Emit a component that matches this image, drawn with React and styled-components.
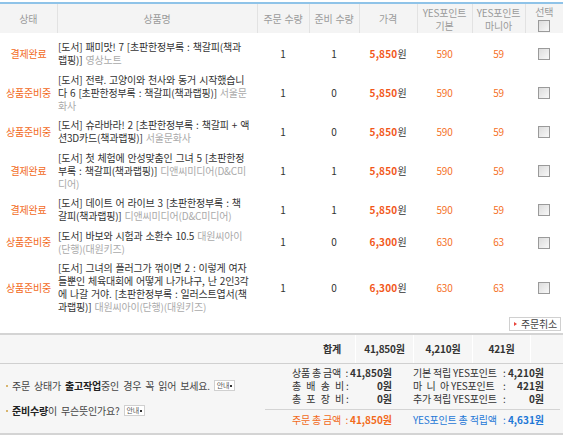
import React from "react";
import styled, { createGlobalStyle } from "styled-components";

const GlobalStyle = createGlobalStyle`
  body {
    margin: 0;
    background: #fff;
    font-family: "Noto Sans CJK KR", "Liberation Sans", sans-serif;
    color: #333;
  }
`;

const orders = [
  {
    status: "결제완료",
    title: "[도서] 패미맛! 7 [초판한정부록 : 책갈피(책과랩핑)]",
    pub: "영상노트",
    qty: 1,
    ready: 1,
    price: "5,850",
    base: 590,
    mania: 59,
  },
  {
    status: "상품준비중",
    title: "[도서] 전략. 고양이와 천사와 동거 시작했습니다 6 [초판한정부록 : 책갈피(책과랩핑)]",
    pub: "서울문화사",
    qty: 1,
    ready: 0,
    price: "5,850",
    base: 590,
    mania: 59,
  },
  {
    status: "상품준비중",
    title: "[도서] 슈라바라! 2 [초판한정부록 : 책갈피 + 액션3D카드(책과랩핑)]",
    pub: "서울문화사",
    qty: 1,
    ready: 0,
    price: "5,850",
    base: 590,
    mania: 59,
  },
  {
    status: "결제완료",
    title: "[도서] 첫 체험에 안성맞춤인 그녀 5 [초판한정부록 : 책갈피(책과랩핑)]",
    pub: "디앤씨미디어(D&C미디어)",
    qty: 1,
    ready: 1,
    price: "5,850",
    base: 590,
    mania: 59,
  },
  {
    status: "결제완료",
    title: "[도서] 데이트 어 라이브 3 [초판한정부록 : 책갈피(책과랩핑)]",
    pub: "디앤씨미디어(D&C미디어)",
    qty: 1,
    ready: 1,
    price: "5,850",
    base: 590,
    mania: 59,
  },
  {
    status: "상품준비중",
    title: "[도서] 바보와 시험과 소환수 10.5",
    pub: "대원씨아이(단행)(대원키즈)",
    qty: 1,
    ready: 0,
    price: "6,300",
    base: 630,
    mania: 63,
  },
  {
    status: "상품준비중",
    title:
      "[도서] 그녀의 플러그가 꺾이면 2 : 이렇게 여자들뿐인 체육대회에 어떻게 나가냐구, 난 2인3각에 나갈 거야. [초판한정부록 : 일러스트엽서(책과랩핑)]",
    pub: "대원씨아이(단행)(대원키즈)",
    qty: 1,
    ready: 0,
    price: "6,300",
    base: 630,
    mania: 63,
  },
];

const cols = [57, 200, 52, 50, 58, 55, 53, 38];

export default function App() {
  return (
    <>
      <GlobalStyle />
      <Page>
        <Table>
          <colgroup>
            {cols.map((w, i) => (
              <col key={i} style={{ width: w }} />
            ))}
          </colgroup>
          <thead>
            <tr>
              <Th>상태</Th>
              <Th>상품명</Th>
              <Th>주문 수량</Th>
              <Th>준비 수량</Th>
              <Th>가격</Th>
              <Th>
                YES포인트
                <br />
                기본
              </Th>
              <Th>
                YES포인트
                <br />
                마니아
              </Th>
              <Th>
                선택
                <br />
                <Check />
              </Th>
            </tr>
          </thead>
          <tbody>
            <Spacer>
              <td colSpan={8} />
            </Spacer>
            {orders.map((o, i) => (
              <tr key={i}>
                <Status>{o.status}</Status>
                <Product>
                  {o.title} <Pub>{o.pub}</Pub>
                </Product>
                <Num>{o.qty}</Num>
                <Num>{o.ready}</Num>
                <Num>
                  <Price>{o.price}</Price>원
                </Num>
                <Point>{o.base}</Point>
                <Point>{o.mania}</Point>
                <Num>
                  <Check />
                </Num>
              </tr>
            ))}
            <tr>
              <ActionCell colSpan={8}>
                <CancelButton>
                  <Arrow />
                  주문취소
                </CancelButton>
              </ActionCell>
            </tr>
          </tbody>
        </Table>

        <Footer>
          <TotalRow>
            <TotalLabel>합계</TotalLabel>
            <TotalCell>41,850원</TotalCell>
            <TotalCell>4,210원</TotalCell>
            <TotalCell>421원</TotalCell>
            <TotalCell />
          </TotalRow>
          <Details>
            <Notes>
              <Note>
                <Bullet />
                주문 상태가 <b>출고작업</b>중인 경우 꼭 읽어 보세요.
                <InfoButton>
                  안내<Dot />
                </InfoButton>
              </Note>
              <Note>
                <Bullet />
                <b>준비수량</b>이 무슨뜻인가요?
                <InfoButton>
                  안내<Dot />
                </InfoButton>
              </Note>
            </Notes>
            <Summary>
              <SumGrid>
                <SumCol>
                  <SumLine $w={100}>
                    <SumLabel $w={52}>상품 총 금액</SumLabel>
                    <Colon>:</Colon>
                    <SumValue>41,850원</SumValue>
                  </SumLine>
                  <SumLine $w={100}>
                    <SumLabel $w={52} $spread>총 배 송 비</SumLabel>
                    <Colon>:</Colon>
                    <SumValue>0원</SumValue>
                  </SumLine>
                  <SumLine $w={100}>
                    <SumLabel $w={52} $spread>총 포 장 비</SumLabel>
                    <Colon>:</Colon>
                    <SumValue>0원</SumValue>
                  </SumLine>
                </SumCol>
                <SumCol>
                  <SumLine $w={131}>
                    <SumLabel $w={88}>기본 적립 YES포인트</SumLabel>
                    <Colon>:</Colon>
                    <SumValue>4,210원</SumValue>
                  </SumLine>
                  <SumLine $w={131}>
                    <SumLabel $w={88}>
                      <Spread>마 니 아</Spread> YES포인트
                    </SumLabel>
                    <Colon>:</Colon>
                    <SumValue>421원</SumValue>
                  </SumLine>
                  <SumLine $w={131}>
                    <SumLabel $w={88}>추가 적립 YES포인트</SumLabel>
                    <Colon>:</Colon>
                    <SumValue>0원</SumValue>
                  </SumLine>
                </SumCol>
              </SumGrid>
              <SumGrid $total>
                <SumCol>
                  <SumLine $w={100} $color="#f26a1b">
                    <SumLabel $w={52}>주문 총 금액</SumLabel>
                    <Colon>:</Colon>
                    <SumValue>41,850원</SumValue>
                  </SumLine>
                </SumCol>
                <SumCol>
                  <SumLine $w={131} $color="#1f78d6">
                    <SumLabel $w={88}>YES포인트 총 적립액</SumLabel>
                    <Colon>:</Colon>
                    <SumValue>4,631원</SumValue>
                  </SumLine>
                </SumCol>
              </SumGrid>
            </Summary>
          </Details>
        </Footer>
      </Page>
    </>
  );
}

const Page = styled.div`
  width: 563px;
  padding-top: 2px;
  font-size: 10px;
  letter-spacing: -0.2px;
  word-spacing: 1px;
`;

const Table = styled.table`
  width: 563px;
  table-layout: fixed;
  border-collapse: collapse;
  border-top: 2px solid #8fc3e8;
  font-size: 10px;
`;

const Th = styled.th`
  height: 29px;
  padding: 0;
  background: #f4f4f4;
  color: #9a9a9a;
  font-weight: normal;
  line-height: 13px;
  text-align: center;
  vertical-align: middle;
  border-left: 1px solid #e2e2e2;
  &:first-child {
    border-left: 0;
  }
`;

const Spacer = styled.tr`
  td {
    height: 4px;
    padding: 0;
  }
`;

const Cell = styled.td`
  padding: 3px 2px 3.5px;
  line-height: 13px;
  vertical-align: middle;
`;

const Status = styled(Cell)`
  color: #f26a1b;
  text-align: center;
  padding-left: 0;
  padding-right: 0;
`;

const Product = styled(Cell)`
  color: #333;
  padding-left: 1px;
  padding-right: 7.8px;
`;

const Pub = styled.span`
  color: #aaa;
`;

const Num = styled(Cell)`
  text-align: center;
  color: #333;
`;

const Price = styled.b`
  color: #f2581b;
  letter-spacing: 0.2px;
`;

const Point = styled(Cell)`
  text-align: center;
  color: #f5701f;
`;

const Check = styled.span`
  display: inline-block;
  width: 10px;
  height: 10px;
  margin-top: 1px;
  border: 1px solid #9a9a9a;
  background: linear-gradient(135deg, #dcdcdc, #f8f8f8);
  vertical-align: middle;
`;

const ActionCell = styled.td`
  padding: 0 2px 2px 0;
  line-height: 0;
  text-align: right;
`;

const CancelButton = styled.span`
  display: inline-flex;
  align-items: center;
  gap: 4px;
  height: 12px;
  padding: 0 3px 0 4px;
  border: 1px solid #d0d0d0;
  background: #fff;
  color: #444;
  font-size: 10px;
  line-height: 12px;
  word-spacing: 0;
  vertical-align: top;
`;

const Arrow = styled.span`
  width: 0;
  height: 0;
  border-top: 2px solid transparent;
  border-bottom: 2px solid transparent;
  border-left: 3px solid #e8453c;
`;

const Footer = styled.div`
  background: #f6f6f6;
  border-top: 2px solid #d4d4d4;
  border-bottom: 2px solid #d4d4d4;
`;

const TotalRow = styled.div`
  display: grid;
  grid-template-columns: 355px 58px 59px 58px 1fr;
  height: 28px;
  border-bottom: 1px solid #d0d0d0;
  font-weight: bold;
  color: #333;
`;

const TotalCell = styled.div`
  display: flex;
  align-items: center;
  justify-content: center;
  border-left: 1px solid #fff;
`;

const TotalLabel = styled(TotalCell)`
  justify-content: flex-end;
  padding-right: 14px;
  border-left: 0;
`;

const Details = styled.div`
  display: flex;
  height: 69px;
`;

const Notes = styled.div`
  width: 265px;
  display: flex;
  flex-direction: column;
  justify-content: center;
  gap: 12px;
  padding-left: 6px;
  box-sizing: border-box;
  color: #444;
  word-spacing: 2px;
  b {
    color: #222;
  }
`;

const Note = styled.div`
  display: flex;
  align-items: center;
  line-height: 13px;
  white-space: pre;
`;

const Bullet = styled.span`
  width: 2px;
  height: 2px;
  margin-right: 4px;
  background: #d8b56e;
`;

const InfoButton = styled.span`
  display: inline-flex;
  align-items: center;
  gap: 1px;
  height: 9px;
  margin-left: 4px;
  padding: 0 2px;
  border: 1px solid #d0d0d0;
  background: #fff;
  font-size: 7px;
  color: #555;
`;

const Dot = styled.span`
  width: 2px;
  height: 2px;
  background: #333;
`;

const Summary = styled.div`
  flex: 1;
  padding: 2px 3px 0 0;
`;

const SumGrid = styled.div`
  display: grid;
  grid-template-columns: 121px 1fr;
  padding: ${(p) => (p.$total ? "3px 0 0 27px" : "0 0 4px 27px")};
  border-top: ${(p) => (p.$total ? "1px solid #d4d4d4" : "0")};
`;

const SumCol = styled.div`
  display: flex;
  flex-direction: column;
`;

const SumLine = styled.div`
  display: flex;
  align-items: center;
  width: ${(p) => p.$w}px;
  line-height: 13px;
  white-space: nowrap;
  word-spacing: 0;
  color: ${(p) => p.$color || "#333"};
`;

const SumLabel = styled.span`
  width: ${(p) => p.$w}px;
  text-align: ${(p) => (p.$spread ? "justify" : "left")};
  text-align-last: ${(p) => (p.$spread ? "justify" : "left")};
`;

const Spread = styled.span`
  display: inline-block;
  width: 36px;
  text-align: justify;
  text-align-last: justify;
`;

const Colon = styled.span`
  margin: 0 2px;
`;

const SumValue = styled.b`
  flex: 1;
  text-align: right;
  letter-spacing: 0;
`;
